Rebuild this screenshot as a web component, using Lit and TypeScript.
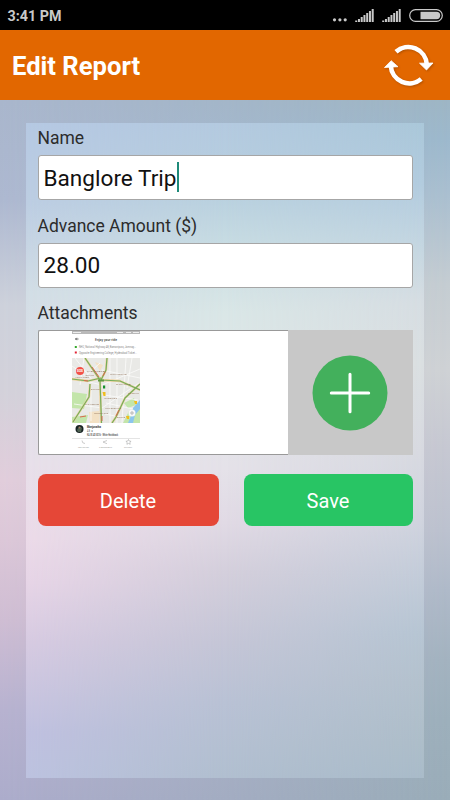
import { LitElement, html, css, svg } from "lit";
import { customElement } from "lit/decorators.js";

@customElement("signal-bars")
class SignalBars extends LitElement {
  static styles = css`:host{display:block;width:19px;height:13px}svg{display:block}`;
  render() {
    return html`<svg width="19" height="13" viewBox="0 0 19 13" fill="#c9c9c9">
      ${[1.5, 3, 5, 7, 9, 11, 13].map((h, i) => svg`<rect x=${0.2 + i * 2.75} y=${13 - h} width="2" height=${h} />`)}
    </svg>`;
  }
}

const label = (x: number, y: number, width: number, text: string) =>
  svg`<text x=${x} y=${y} textLength=${width} lengthAdjust="spacingAndGlyphs">${text}</text>`;

@customElement("ride-thumbnail")
class RideThumbnail extends LitElement {
  static styles = css`
    :host{display:block;width:68px;height:123px}
    svg{display:block;font-family:Roboto,sans-serif}
    .screen{overflow:visible}
  `;
  render() {
    return html`<svg class="screen" width="68" height="123" viewBox="0 0 68 123">
      <rect width="68" height="123" fill="#fff"/>
      <rect width="68" height="3" fill="#b9b9b9"/>
      <path d="M1 1.500h8M45 1.500h6M54 1.500h5M61 1.500h6" stroke="#eee" stroke-width="1"/>
      <path d="M6.500 8h-3m1.200-1.200L3.500 8l1.200 1.200" stroke="#444" stroke-width=".8" fill="none"/>
      <g font-size="4" font-weight="500" fill="#444">${label(23, 9.5, 22, "Enjoy your ride")}</g>
      <rect x="2.800" y="15" width="2" height="2" fill="#35a82c"/>
      <rect x="2.800" y="20.500" width="2" height="2" fill="#e22335"/>
      <g font-size="3" fill="#888">${label(7, 17.4, 57, "NH2, National Highway 48, Bamanipura, Jamnag...")}${label(7, 22.9, 58, "Opposite Engineering College, Hyderabad Ticket...")}</g>
      <svg y="27" width="68" height="65" viewBox="0 0 68 65">
        <rect width="68" height="65" fill="#e9e9e6"/>
        <path d="M0 34l15 2-3 15-12-1zM0 59l16-2-2 8H0zM51 65l6-12 11-5v17zM52 45l10-5 2 7-8 3z" fill="#c3e5aa"/>
        <path d="M17 54l10-1v12H18zM23 4l5 9 3-6z" fill="#f3e1c4"/>
        <path d="M68 42l-7 8-2 8-3 7h5l2-8 5-6z" fill="#8bc5ed"/>
        <g stroke="#fbfbfa" stroke-width=".8" fill="none">
          <path d="M0 8l14 10L28 5M0 20l30 7 38-16M2 46l28 4 37-25M38 0v65M45 0v65M54 0l-4 65M30 12l38 8M32 37l34 5M34 45l27 6M12 0l-4 27M3 0l18 23M19 30v33M33 56l20 4M60 0l-5 30"/>
        </g>
        <g fill="none" stroke-linejoin="round">
          <path d="M13 0l15 22 1 43M35 0l-1 12-5 10 19 1 20 9M0 21l16 2 13-3M18 26l-1 13L1 64M68 26L53 40 44 59l-4 6" stroke="#f0d3a0" stroke-width="2.300"/>
          <path d="M13 0l15 22 1.500 43M35 0l-1 12-5 10 19 1 20 9M0 21l16 2 13-3M18 26l-1 13L1 64M68 26L53 40 44 59l-4 6" stroke="#73ae5b" stroke-width="1.200"/>
          <path d="M20 9l7 10M12 22.500l4 .5M47 52l-3 6M8 59l6-1M30 58v5M33 14l-2 4" stroke="#d8694f" stroke-width="1"/>
          <path d="M26 22.500h6" stroke="#5f9a45" stroke-width="2"/>
        </g>
        <circle cx="8" cy="13" r="4" fill="#f35148"/>
        <g font-size="3" font-weight="700" fill="#fff">${label(5, 14, 6, "SOS")}</g>
        <path d="M31 27.500h2.200v3H31z" fill="#16902b"/>
        <path d="M30.500 34h3v4h-2zM62 43h3v3h-2zM54 58h3v3h-2z" fill="#f0bd1d"/>
        <circle cx="60" cy="55" r="3.500" fill="#f8f8f8"/><circle cx="60" cy="55" r="1.200" fill="none" stroke="#888" stroke-width=".6"/>
        <g font-size="2.500" fill="#8d6e55" opacity=".8">
          ${label(15, 13.5, 19, "SHANTINAGAR")}${label(38, 17, 17, "RICHMOND")}
          ${label(13, 17.5, 9, "LANGFORD")}${label(3, 20, 14, "HOSUR ROAD")}
          ${label(19, 31.5, 9, "ADUGODI")}${label(44, 27, 15, "EJIPURA")}
          ${label(32, 41, 13, "KORAMANGALA")}${label(13, 47, 14, "S G PALYA")}
          ${label(33, 51, 16, "VENKATAPURA")}${label(22, 56, 14, "TAVAREKERE")}
          ${label(56, 36, 11, "DOMLUR")}${label(45, 60, 8, "AGARA")}
        </g>
      </svg>
      <circle cx="7.500" cy="98" r="4" fill="#182424"/><path d="M5 99q2-5 5-2l-1 4H6z" fill="#4d6151"/><circle cx="7.500" cy="96.500" r="1" fill="#a07d62"/>
      <g font-size="3.200" font-weight="700" fill="#333">${label(15, 97.2, 14, "Manjunatha")}</g>
      <g font-size="2.800" fill="#555">${label(15, 101, 6, "4.8 ★")}</g>
      <g font-size="2.800" font-weight="500" fill="#444">${label(15, 104.5, 31, "KA 05 AD 8226 · White Hatchback")}</g>
      <path d="M0 107.500h68" stroke="#ddd" stroke-width=".8"/>
      <path d="M10 109.500q0 3 3 3M35 109.500l-4 1.500 4 1.700M56.500 108.500l.8 1.600 1.800.2-1.300 1.200.4 1.800-1.700-.9-1.600.9.300-1.800-1.300-1.200 1.800-.2z" stroke="#999" stroke-width=".5" fill="none"/>
      <g font-size="2.300" fill="#999">${label(6, 116.5, 11, "CALL DRIVER")}${label(27, 116.5, 13, "SHARE DETAILS")}${label(52, 116.5, 8, "SUPPORT")}</g>
    </svg>`;
  }
}

@customElement("app-root")
class AppRoot extends LitElement {
  static styles = css`
    :host{display:flex;flex-direction:column;width:450px;height:800px;overflow:hidden;font-family:Roboto,sans-serif}
    *{box-sizing:border-box}
    .status{height:30px;flex:none;background:#000;color:#c9c9c9;display:flex;align-items:center;padding:1px 7px 0 7.500px;font-size:14.300px;font-weight:700}
    .clock{flex:1}
    .tray{display:flex;align-items:center;gap:8px}
    svg{display:block}
    header{height:70px;flex:none;background:#e26700;display:flex;align-items:center;justify-content:space-between;padding:1px 16px 0 12px}
    header svg{filter:drop-shadow(1px 1px 1px rgba(90,40,0,.35))}
    h1{margin:0;color:#fff;font-size:25.600px;line-height:30px;font-weight:700}
    main{flex:1;position:relative;padding:23px 26px 22px 26px;background:linear-gradient(180deg,#9eb6c5 0,#9db9cd 40px,#a9bfd0 90px,#c5cdd2 185px,#cfd2d5 270px,#c6c8d2 350px,#bcc2cf 430px,#afbac9 490px,#a3b3c0 560px,#9db0bc 620px,#9aadb9 700px)}
    main::before{content:"";position:absolute;inset:0;background:linear-gradient(180deg,#a9b6cc 0,#adb8d0 100px,#cdd1db 205px,#d3d1da 290px,#e1cddb 380px,#dcc7d8 440px,#cfbdd3 520px,#b7b2d0 610px,#acaccb 700px);-webkit-mask-image:linear-gradient(90deg,#000 0,transparent 100%);mask-image:linear-gradient(90deg,#000 0,transparent 100%)}
    .panel{position:relative;isolation:isolate;height:655px;padding:5px 11.500px 0 11.500px;background:linear-gradient(180deg,#b4cae0 0,#b8d0df 70px,#c9dde3 125px,#dae7e7 190px,#e2e7e9 275px,#e5e2e9 345px,#e1dae5 400px,#d4cfdc 450px,#c5c6d7 520px,#b9c2d5 580px,#b1bfd0 655px)}
    .panel::before,.panel::after{content:"";position:absolute;inset:0;z-index:-1}
    .panel::before{background:linear-gradient(180deg,#b5c8e2 0,#bccde2 80px,#d2dde5 170px,#dedfe8 270px,#e7dfe9 340px,#ebdae8 415px,#e6d4e6 460px,#d6cae1 520px,#c8c4df 575px,#bfc0df 610px,#bcc2df 655px);-webkit-mask-image:linear-gradient(90deg,#000,transparent 50%);mask-image:linear-gradient(90deg,#000,transparent 50%)}
    .panel::after{background:linear-gradient(180deg,#aac7d9 0,#b2cbde 60px,#c6d7e1 130px,#d6dde2 180px,#dadfe1 240px,#d7d9e0 330px,#cfd3de 400px,#c3ccd9 450px,#b6c5d3 510px,#b3c1cd 560px,#adbdc9 620px,#a9bbc9 655px);-webkit-mask-image:linear-gradient(90deg,transparent 50%,#000);mask-image:linear-gradient(90deg,transparent 50%,#000)}
    label{display:block;font-size:17.500px;line-height:20px;color:#2c2c2c;margin-bottom:7px}
    .field{height:45px;border:1.500px solid #a6a6a6;border-radius:3px;background:#fff;display:flex;align-items:center;padding:1px 0 0 5px;color:#111;font-size:22.600px;margin-bottom:15.500px}
    .caret{width:2px;height:30px;background:#1e8a79;margin:-2px 0 0 0}
    .attach{height:125px;display:flex;margin-bottom:19px}
    .files{width:250px;background:#fff;border:1px solid #999;border-right:0;border-radius:2px 0 0 2px;padding-left:33.500px}
    .add{flex:1;background:#c8c8c8;display:flex;align-items:center;justify-content:center}
    .actions{display:grid;grid-template-columns:181px 169px;column-gap:25px}
    button{height:52px;border:0;border-radius:8px;color:#fff;font:400 20px Roboto,sans-serif;padding:1px 0 0}
    .delete{background:#e54737}
    .save{background:#28c564}
  `;
  render() {
    return html`
      <div class="status">
        <span class="clock">3:41 PM</span>
        <div class="tray">
          <svg width="15" height="13" viewBox="0 0 15 13" fill="#c9c9c9"><circle cx="2.500" cy="10.800" r="1.600"/><circle cx="7.900" cy="10.800" r="1.600"/><circle cx="13.200" cy="10.800" r="1.600"/></svg>
          <signal-bars></signal-bars><signal-bars></signal-bars>
          <svg width="34" height="13" viewBox="0 0 34 13"><rect x=".7" y=".7" width="32.600" height="11.600" rx="5.800" fill="none" stroke="#c9c9c9" stroke-width="1.200"/><path d="M11.500 2.800H27.500a3.700 3.700 0 0 1 0 7.400H11.500z" fill="#c9c9c9"/></svg>
        </div>
      </div>
      <header>
        <h1>Edit Report</h1>
        <svg width="50" height="44" viewBox="384 43.500 50 44">
          <g fill="none" stroke="#fff" stroke-width="4.600"><path d="M396 51.300A18.500 18.500 0 0 1 426.800 64"/><path d="M421.200 78.500A18.500 18.500 0 0 1 390.800 65.500"/></g>
          <path d="M419.500 62.700l13.500-.2-6.500 7zM384.500 67l6.700-6.800 6.800 6z" fill="#fff" stroke="#fff" stroke-width=".8" stroke-linejoin="round"/>
        </svg>
      </header>
      <main>
        <section class="panel">
          <label>Name</label>
          <div class="field"><span>Banglore Trip</span><span class="caret"></span></div>
          <label>Advance Amount ($)</label>
          <div class="field"><span>28.00</span></div>
          <label>Attachments</label>
          <div class="attach">
            <div class="files"><ride-thumbnail></ride-thumbnail></div>
            <div class="add"><svg width="76" height="76" viewBox="0 0 76 76"><circle cx="38" cy="38" r="37.500" fill="#43b05c"/><path d="M38 19.300v37.400M19.300 38h37.400" stroke="#fff" stroke-width="3" stroke-linecap="round"/></svg></div>
          </div>
          <div class="actions"><button class="delete">Delete</button><button class="save">Save</button></div>
        </section>
      </main>`;
  }
}
